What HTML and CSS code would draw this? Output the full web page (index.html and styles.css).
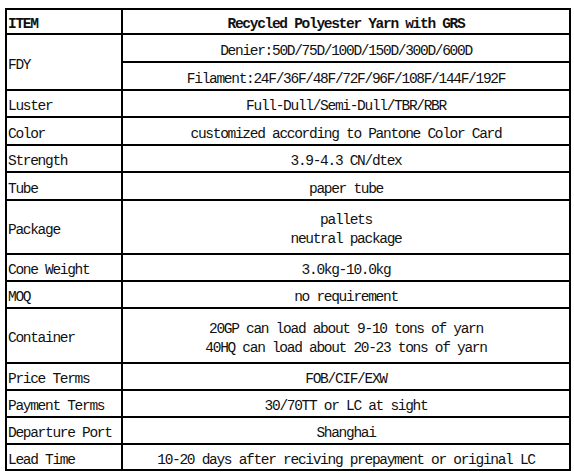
FILE: index.html
```html
<!DOCTYPE html>
<html lang="en">
<head>
<meta charset="utf-8">
<title>Recycled Polyester Yarn with GRS</title>
<link rel="stylesheet" href="styles.css">
</head>
<body>
<div class="sheet">
  <div class="cell key bold">ITEM</div>
  <div class="cell val bold">Recycled Polyester Yarn with GRS</div>

  <div class="cell key span2">FDY</div>
  <div class="cell val">Denier:50D/75D/100D/150D/300D/600D</div>
  <div class="cell val">Filament:24F/36F/48F/72F/96F/108F/144F/192F</div>

  <div class="cell key">Luster</div>
  <div class="cell val">Full-Dull/Semi-Dull/TBR/RBR</div>

  <div class="cell key">Color</div>
  <div class="cell val">customized according to Pantone Color Card</div>

  <div class="cell key">Strength</div>
  <div class="cell val">3.9-4.3 CN/dtex</div>

  <div class="cell key">Tube</div>
  <div class="cell val">paper tube</div>

  <div class="cell key">Package</div>
  <div class="cell val"><span>pallets</span><span>neutral package</span></div>

  <div class="cell key">Cone Weight</div>
  <div class="cell val">3.0kg-10.0kg</div>

  <div class="cell key">MOQ</div>
  <div class="cell val">no requirement</div>

  <div class="cell key">Container</div>
  <div class="cell val"><span>20GP can load about 9-10 tons of yarn</span><span>40HQ can load about 20-23 tons of yarn</span></div>

  <div class="cell key">Price Terms</div>
  <div class="cell val">FOB/CIF/EXW</div>

  <div class="cell key">Payment Terms</div>
  <div class="cell val">30/70TT or LC at sight</div>

  <div class="cell key">Departure Port</div>
  <div class="cell val">Shanghai</div>

  <div class="cell key">Lead Time</div>
  <div class="cell val">10-20 days after reciving prepayment or original LC</div>
</div>
</body>
</html>
```

FILE: styles.css
```css
html, body {
  margin: 0;
  padding: 0;
  background: #ffffff;
}

body {
  font-family: "Liberation Mono", "Courier New", monospace;
  font-size: 14.5px;
  letter-spacing: -1.3px;
  color: #111111;
}

.sheet {
  display: grid;
  grid-template-columns: 116px 448px;
  grid-template-rows: 25px 28px 28px 27px 28px 27px 28px 54px 27px 27px 55px 27px 27px 27px 26px;
  width: 566px;
  box-sizing: border-box;
  margin: 8px 0 0 5px;
  border-left: 2px solid #000;
  border-top: 2px solid #000;
}

.cell {
  box-sizing: border-box;
  border-right: 2px solid #000;
  border-bottom: 2px solid #000;
  padding-top: 6px;
  display: flex;
  line-height: 19px;
  white-space: nowrap;
}

.key {
  align-items: center;
  padding-left: 1px;
}

.span2 {
  grid-row: span 2;
}

.val {
  flex-direction: column;
  justify-content: center;
  align-items: center;
  text-align: center;
}

.bold {
  font-weight: bold;
}
```
